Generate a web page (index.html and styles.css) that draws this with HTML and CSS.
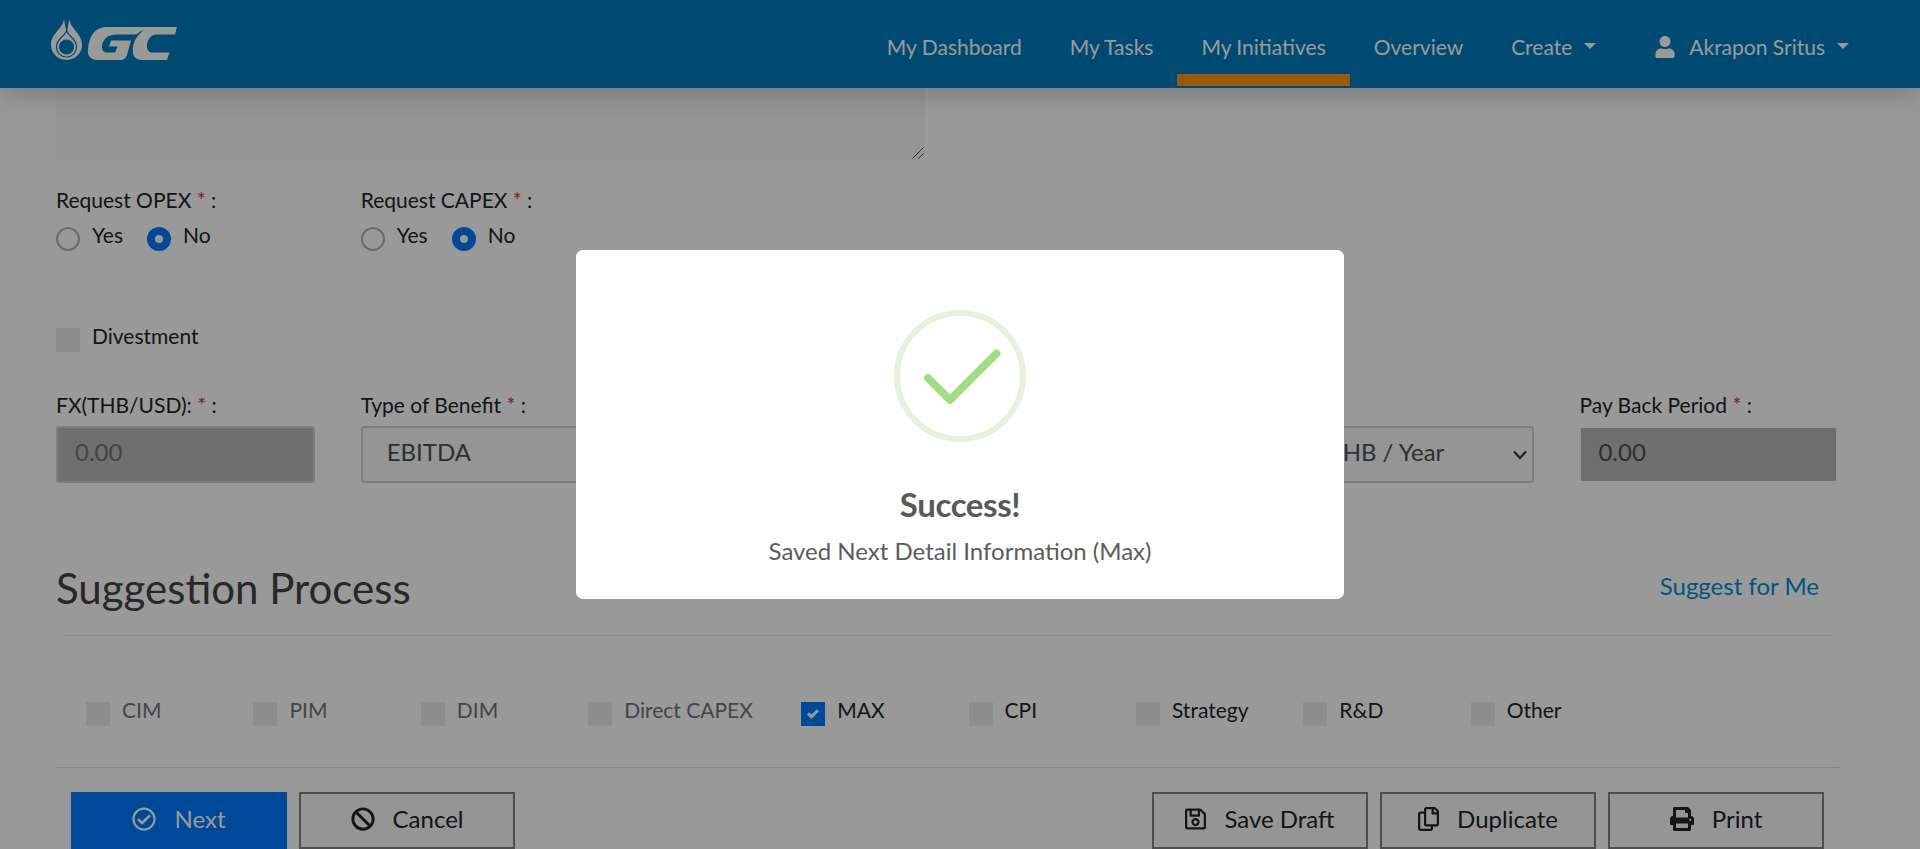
FILE: index.html
```html
<!DOCTYPE html>
<html lang="en">
<head>
<meta charset="utf-8">
<title>My Initiatives</title>
<link rel="stylesheet" href="styles.css">
</head>
<body>
<header class="topbar">
  <svg class="logo" viewBox="0 0 128 44" width="128" height="44">
    <path fill="#fff" fill-rule="evenodd" d="M14 0C13 10 1 14 1 26a15.500 15 0 0 0 31 0C32 14 20 10 19.500 0C18.500 3 18 8 16.700 14C15.500 8 14.500 3 14 0ZM16.500 20.500a7.500 7.500 0 1 0 .1 0Z"/>
    <path fill="none" stroke="#007bbb" stroke-width="1.200" d="M16.600 1V11C16 17 6.500 19 6.500 28a10 10 0 0 0 20 0C26.500 19 17 17 16.600 11"/>
    <path fill="#fff" d="M55 8H127L125 15.500H107C100 15.500 97 22 97 27C97 31 99 33.500 102 33.500H119.500L117 41H92C84 41 82 35 83 28C84 21 88 16 93 11.500C90 11.500 88 15.500 85 15.500H67C56 15.500 52 22 52 28C52 32 54 33.500 57 33.500H65L67.500 27.500H59L61 21.500H81L77 36C76 39 74 41 70 41H48C40 41 37 36 38 30C39 18 44 9 55 8Z"/>
  </svg>
  <nav class="menu">
    <a class="menu-item">My Dashboard</a>
    <a class="menu-item">My Tasks</a>
    <a class="menu-item active">My Initiatives</a>
    <a class="menu-item">Overview</a>
    <a class="menu-item">Create<i class="caret"></i></a>
    <a class="menu-item user"><svg class="user-icon" viewBox="0 0 448 512"><path d="M224 256c70.700 0 128-57.300 128-128S294.700 0 224 0 96 57.300 96 128s57.300 128 128 128zm89.600 32h-16.700c-22.200 10.200-46.900 16-72.900 16s-50.600-5.800-72.900-16h-16.700C60.200 288 0 348.200 0 422.400V464c0 26.500 21.500 48 48 48h352c26.500 0 48-21.500 48-48v-41.600c0-74.200-60.200-134.400-134.400-134.400z"/></svg>Akrapon Sritus<i class="caret"></i></a>
  </nav>
</header>

<main class="content">
  <div class="textarea"><svg class="grip" viewBox="0 0 12 12" width="12" height="12"><path d="M0.500 11.500L11.500 0.500M6.500 11.500L11.500 6.500"/></svg></div>

  <section class="grid requests">
    <div>
      <div class="label">Request OPEX <span class="req">*</span> :</div>
      <div class="radios">
        <span class="radio"></span><span class="opt first">Yes</span>
        <span class="radio on"></span><span class="opt">No</span>
      </div>
    </div>
    <div>
      <div class="label">Request CAPEX <span class="req">*</span> :</div>
      <div class="radios">
        <span class="radio"></span><span class="opt first">Yes</span>
        <span class="radio on"></span><span class="opt">No</span>
      </div>
    </div>
  </section>

  <div class="check divest"><span class="box"></span><span>Divestment</span></div>

  <section class="grid fields">
    <div>
      <div class="label">FX(THB/USD): <span class="req">*</span> :</div>
      <div class="field disabled">0.00</div>
    </div>
    <div>
      <div class="label">Type of Benefit <span class="req">*</span> :</div>
      <div class="field select">EBITDA</div>
    </div>
    <div class="unit">
      <div class="field select">M THB / Year<svg class="chev" viewBox="0 0 14 10" width="14" height="10"><path d="M1 1.500L7 8L13 1.500"/></svg></div>
    </div>
    <div class="payback">
      <div class="label">Pay Back Period <span class="req">*</span> :</div>
      <div class="field disabled plain">0.00</div>
    </div>
  </section>

  <div class="section-head">
    <h2 class="title">Suggestion Process</h2>
    <a class="suggest">Suggest for Me</a>
  </div>
  <hr class="rule short">

  <div class="processes">
    <div class="check off"><span class="box"></span><span>CIM</span></div>
    <div class="check off"><span class="box"></span><span>PIM</span></div>
    <div class="check off"><span class="box"></span><span>DIM</span></div>
    <div class="check off wide"><span class="box"></span><span>Direct CAPEX</span></div>
    <div class="check"><span class="box ticked"><svg viewBox="0 0 8 8" width="12" height="12"><path fill="#fff" d="M6.564.75l-3.590 3.612-1.538-1.550L0 4.260 2.974 7.250 8 2.193z"/></svg></span><span>MAX</span></div>
    <div class="check"><span class="box"></span><span>CPI</span></div>
    <div class="check"><span class="box"></span><span>Strategy</span></div>
    <div class="check"><span class="box"></span><span>R&amp;D</span></div>
    <div class="check"><span class="box"></span><span>Other</span></div>
  </div>
  <hr class="rule">

  <div class="actions">
    <a class="btn primary"><svg viewBox="0 0 512 512"><path d="M256 8C119.033 8 8 119.033 8 256s111.033 248 248 248 248-111.033 248-248S392.967 8 256 8zm0 48c110.532 0 200 89.451 200 200 0 110.532-89.451 200-200 200-110.532 0-200-89.451-200-200 0-110.532 89.451-200 200-200m140.204 130.267l-22.536-22.718c-4.667-4.705-12.265-4.736-16.970-.068L215.346 303.697l-59.792-60.277c-4.667-4.705-12.265-4.736-16.970-.069l-22.719 22.536c-4.705 4.667-4.736 12.265-.068 16.971l90.781 91.516c4.667 4.705 12.265 4.736 16.970.068l172.589-171.204c4.704-4.668 4.734-12.266.067-16.971z"/></svg>Next</a>
    <a class="btn"><svg viewBox="0 0 512 512"><path d="M256 8C119.034 8 8 119.033 8 256s111.034 248 248 248 248-111.034 248-248S392.967 8 256 8zm130.108 117.892c65.448 65.448 70 165.481 20.677 235.637L150.470 105.216c70.204-49.356 170.226-44.735 235.638 20.676zM125.892 386.108c-65.448-65.448-70-165.481-20.677-235.637L361.530 406.784c-70.203 49.356-170.226 44.736-235.638-20.676z"/></svg>Cancel</a>
    <span class="spacer"></span>
    <a class="btn"><svg class="narrow" viewBox="0 0 448 512"><path d="M433.941 129.941l-83.882-83.882A48 48 0 0 0 316.118 32H48C21.490 32 0 53.490 0 80v352c0 26.510 21.490 48 48 48h352c26.510 0 48-21.490 48-48V163.882a48 48 0 0 0-14.059-33.941zM272 80v80H144V80h128zm122 352H54a6 6 0 0 1-6-6V86a6 6 0 0 1 6-6h42v104c0 13.255 10.745 24 24 24h176c13.255 0 24-10.745 24-24V83.882l78.243 78.243a6 6 0 0 1 1.757 4.243V426a6 6 0 0 1-6 6zM224 232c-48.523 0-88 39.477-88 88s39.477 88 88 88 88-39.477 88-88-39.477-88-88-88zm0 128c-22.056 0-40-17.944-40-40s17.944-40 40-40 40 17.944 40 40-17.944 40-40 40z"/></svg>Save Draft</a>
    <a class="btn"><svg class="narrow" viewBox="0 0 448 512"><path d="M433.941 65.941l-51.882-51.882A48 48 0 0 0 348.118 0H176c-26.510 0-48 21.490-48 48v48H48c-26.510 0-48 21.490-48 48v320c0 26.510 21.490 48 48 48h224c26.510 0 48-21.490 48-48v-48h80c26.510 0 48-21.490 48-48V99.882a48 48 0 0 0-14.059-33.941zM266 464H54a6 6 0 0 1-6-6V150a6 6 0 0 1 6-6h74v224c0 26.510 21.490 48 48 48h96v42a6 6 0 0 1-6 6zm128-96H182a6 6 0 0 1-6-6V54a6 6 0 0 1 6-6h106v88c0 13.255 10.745 24 24 24h88v202a6 6 0 0 1-6 6zm6-256h-64V48h9.632c1.591 0 3.117.632 4.243 1.757l48.368 48.368a6 6 0 0 1 1.757 4.243V112z"/></svg>Duplicate</a>
    <a class="btn"><svg viewBox="0 0 512 512"><path d="M448 192V77.250c0-8.490-3.370-16.620-9.370-22.630L393.370 9.370c-6-6-14.140-9.370-22.630-9.370H96C78.330 0 64 14.330 64 32v160c-35.350 0-64 28.650-64 64v112c0 8.840 7.160 16 16 16h48v96c0 17.670 14.330 32 32 32h320c17.670 0 32-14.330 32-32v-96h48c8.840 0 16-7.160 16-16V256c0-35.350-28.650-64-64-64zm-64 256H128v-96h256v96zm0-224H128V64h192v48c0 8.840 7.160 16 16 16h48v96zm48 72c-13.250 0-24-10.750-24-24 0-13.260 10.750-24 24-24s24 10.740 24 24c0 13.250-10.750 24-24 24z"/></svg>Print</a>
  </div>
</main>

<div class="overlay">
  <div class="modal">
    <svg class="success" viewBox="0 0 132 132" width="132" height="132">
      <circle cx="66" cy="66" r="63" fill="none" stroke="#e4f4db" stroke-width="6"/>
      <path d="M34 68L56 90L102.500 43.500" fill="none" stroke="#a5dc86" stroke-width="8" stroke-linecap="round" stroke-linejoin="round"/>
    </svg>
    <div class="modal-title">Success!</div>
    <div class="modal-text">Saved Next Detail Information (Max)</div>
  </div>
</div>
</body>
</html>
```
FILE: styles.css
```css
* { box-sizing: border-box; }
body {
  margin: 0;
  height: 849px;
  overflow: hidden;
  background: #fff;
  color: #212529;
  font-family: Lato, "Open Sans", sans-serif;
  font-size: 21px;
}
.topbar {
  position: relative;
  z-index: 1;
  height: 88px;
  display: flex;
  justify-content: space-between;
  padding: 0 47px 0 50px;
  background: #007bbb;
  box-shadow: 0 10px 20px rgba(0,0,0,.15);
}
.logo { margin-top: 19px; }
.menu { display: flex; color: #fff; }
.menu-item {
  display: flex;
  align-items: center;
  height: 86px;
  padding: 19px 24px 0;
  line-height: 30px;
  white-space: nowrap;
  border-bottom: 12px solid transparent;
}
.menu-item.active { border-bottom-color: #ff961b; }
.user { padding-left: 35px; }
.user-icon { width: 20px; height: 22px; fill: #fff; margin-right: 14px; }
.caret {
  margin: -2px 0 0 12px;
  border: 6px solid transparent;
  border-top-color: #fff;
  border-bottom: 0;
}
.content { padding: 0 81px 0 56px; }
.textarea {
  width: 869px;
  height: 72px;
  background: #f8f8f8;
  display: flex;
  justify-content: flex-end;
  align-items: flex-end;
  padding: 1px;
}
.grip path { fill: none; stroke: #555; }
.grid {
  display: grid;
  grid-template-columns: repeat(6, 259px);
  column-gap: 45.700px;
}
.label { height: 30px; line-height: 29px; white-space: nowrap; }
.req { color: #dc3545; }
.requests { margin-top: 25px; height: 91px; }
.radios { display: flex; padding-top: 6px; }
.radio {
  width: 24px;
  height: 24px;
  margin-top: 6px;
  border: 2px solid #adb5bd;
  border-radius: 50%;
}
.radio.on { border: 8px solid #007bff; }
.opt { margin-left: 12px; line-height: 28px; }
.opt.first { width: 55px; }
.check { display: flex; gap: 12px; line-height: 28px; white-space: nowrap; }
.box { width: 24px; height: 24px; margin-top: 6px; background: #e9ecef; flex: none; }
.ticked { background: #007bff; display: flex; align-items: center; justify-content: center; }
.check.off { color: #6c757d; }
.divest { margin-top: 46px; height: 30px; }
.fields { margin-top: 38px; height: 92px; }
.field {
  height: 57px;
  margin-top: 6px;
  border: 2px solid #ced4da;
  border-radius: 3px;
  padding: 0 17px;
  font-size: 24px;
  line-height: 48px;
  color: #495057;
  background: #f8f8f8;
  white-space: nowrap;
}
.select { padding: 0 5px 0 24px; display: flex; justify-content: space-between; }
.chev { margin-top: 22px; }
.disabled { background: #b9b9b9; color: #6c757d; }
.plain { border-color: #fbfbfb; color: #495057; }
.unit { grid-column: 5; padding-top: 30px; }
.chev path { fill: none; stroke: #333; stroke-width: 2; }
.section-head { display: flex; justify-content: space-between; margin-top: 77px; height: 76px; padding-right: 20px; }
.title { margin: 0; font-weight: 400; font-size: 42px; line-height: 59px; color: #444; }
.suggest { font-size: 24px; line-height: 53px; color: #0090d0; }
.rule { margin: 0; border: 0; height: 1px; background: #e6e6e6; }
.short { margin: 0 7px; }
.processes { display: flex; padding: 60px 30px 0; height: 131px; }
.processes .check { width: 167.400px; }
.processes .wide { width: 213px; }
.actions { display: flex; gap: 12px; padding: 24px 15px 0 15px; }
.btn {
  width: 216px;
  height: 57px;
  border: 2px solid #808080;
  background: #f8f8f8;
  font-size: 24px;
  display: flex;
  align-items: center;
  justify-content: center;
  gap: 18px;
  padding-bottom: 4px;
}
.btn svg { height: 24px; width: 24px; fill: currentColor; }
.btn svg.narrow { width: 21px; }
.primary { background: #007bff; border-color: #007bff; color: #fff; }
.spacer { flex: 1; }
.overlay {
  position: absolute;
  inset: 0;
  z-index: 2;
  display: flex;
  align-items: center;
  justify-content: center;
  background: rgba(0,0,0,.4);
}
.modal {
  width: 768px;
  height: 349px;
  border-radius: 7px;
  background: #fff;
  display: flex;
  flex-direction: column;
  align-items: center;
  padding-top: 60px;
}
.modal-title { margin-top: 40px; font-size: 33px; font-weight: 700; letter-spacing: -.4px; line-height: 44px; color: #595959; }
.modal-text { margin-top: 9px; font-size: 24px; line-height: 32px; color: #5c5c5c; }
```
